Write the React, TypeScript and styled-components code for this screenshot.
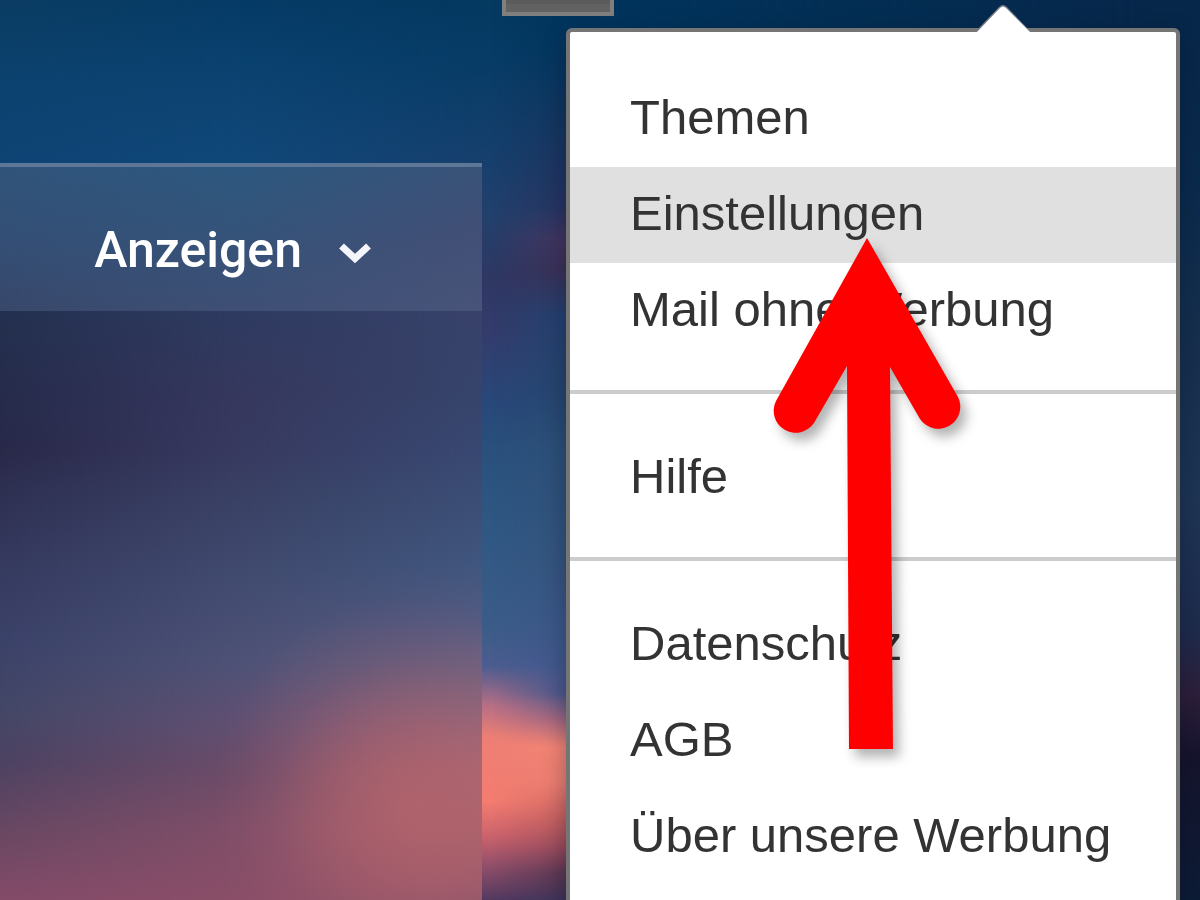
import React from "react";
import styled, { createGlobalStyle } from "styled-components";

const GlobalStyle = createGlobalStyle`
  *, *::before, *::after { box-sizing: border-box; }
  html, body, #root { margin: 0; height: 100%; }
  body { background: #0b3d63; }
`;

const Page = styled.div`
  position: relative;
  display: flex;
  flex-direction: column;
  height: 100vh;
  overflow: hidden;
  isolation: isolate;
  font-family: "Liberation Sans", Arial, sans-serif;
`;

const Sky = styled.div`
  position: absolute;
  inset: 0;
  z-index: -1;
`;

/* One vertical run of sky colours, faded in from left to right over the layer before it. */
const SkyLayer = styled.div<{ $stops: string; $fade?: string }>`
  position: absolute;
  inset: 0;
  background: linear-gradient(to bottom, ${(p) => p.$stops});
  ${(p) => p.$fade && `mask-image: linear-gradient(to right, ${p.$fade});`}
`;

/* The sunlit cloud seen through the panel. */
const CloudGlow = styled.div`
  position: absolute;
  inset: 0;
  background: radial-gradient(
    ellipse 42% 28% at 86% 85%,
    rgba(182, 100, 107, 0.75) 0%,
    rgba(178, 98, 107, 0.5) 35%,
    rgba(160, 92, 110, 0.18) 70%,
    rgba(150, 90, 110, 0) 100%
  );
`;

const TopBar = styled.header`
  display: flex;
  flex: none;
  justify-content: flex-end;
  align-items: flex-start;
  height: 28px;
  padding-right: 586px;
`;

const TopButton = styled.button`
  width: 112px;
  height: 16px;
  padding: 0;
  border: 4px solid #7f7f7f;
  border-top: 0;
  background: #5b5b5b;
  box-shadow: inset 0 -8px 0 #626262;
`;

const Columns = styled.div`
  flex: 1;
  display: grid;
  grid-template-columns: minmax(0, 1fr) 614px;
  gap: 84px;
  min-height: 0;
  padding-right: 20px;
`;

const Panel = styled.main`
  position: relative;
  isolation: isolate;
  margin-top: 135px;
`;

const Toolbar = styled.div`
  position: relative;
  display: flex;
  justify-content: flex-end;
  height: 148px;
  padding: 53px 111px 0 0;
  border-top: 4px solid #5f7796;
  isolation: isolate;
`;

const ViewButton = styled.button`
  display: flex;
  align-items: center;
  gap: 37px;
  height: 60px;
  padding: 0;
  border: 0;
  background: none;
  color: #fff;
  font: 500 50px/60px Roboto, "Noto Sans", sans-serif;
`;

const Menu = styled.nav`
  position: relative;
  border: 4px solid #757575;
  border-radius: 6px;
  background: #fff;
  box-shadow: 0 8px 24px rgba(0, 8, 24, 0.32);
`;

const MenuTip = styled.svg`
  position: absolute;
  right: 143px;
  top: -28px;
`;

const MenuGroup = styled.ul`
  margin: 0;
  padding: 36px 0 31px;
  list-style: none;

  & + & {
    border-top: 4px solid #ccc;
  }
  &:first-of-type {
    padding-top: 39px;
  }
`;

const MenuLink = styled.a<{ $active?: boolean }>`
  display: block;
  padding: 0 0 4px 60px;
  background: ${(p) => (p.$active ? "#e0e0e0" : "transparent")};
  color: #333;
  font-size: 49px;
  line-height: 92px;
  text-decoration: none;
  white-space: nowrap;
`;

const Pointer = styled.svg`
  position: absolute;
  top: 200px;
  right: 196px;
  pointer-events: none;
  filter: drop-shadow(6px 8px 6px rgba(0, 0, 0, 0.3));
`;

const groups = [
  ["Themen", "Einstellungen", "Mail ohne Werbung"],
  ["Hilfe"],
  ["Datenschutz", "AGB", "Über unsere Werbung"],
];

export default function App() {
  return (
    <Page>
      <GlobalStyle />
      <Sky aria-hidden="true">
        <SkyLayer $stops="#0b3d63 0%, #0c426f 9%, #0e4475 18%, #24304f 100%" />
        <SkyLayer
          $fade="transparent 0%, #000 20%"
          $stops="#053b66 0%, #0b4270 8%, #10487a 18%, #24304f 100%"
        />
        <SkyLayer
          $fade="transparent 20%, #000 40%"
          $stops="#043960 0%, #063c66 6%, #153f6d 17%, #23406c 24%, #2f3763 31%, #333c6c 37%, #28487a 45%, #2a507c 50%, #2e5782 58%, #3c5c88 70%, #4c5c90 74%, #b96f84 78.5%, #ee7f74 82%, #f47c70 89%, #ca626c 93%, #94506a 96%, #53395f 100%"
        />
        <SkyLayer
          $fade="transparent 41%, #000 47%"
          $stops="#00345c 0%, #04365f 6%, #17365f 15%, #263462 23%, #42355f 26.5%, #3b3157 30%, #24416f 35%, #26466f 44%, #2c5078 50%, #34547e 62%, #40588c 73%, #4a588c 77%, #a06680 80%, #f28574 83%, #ea7d70 87%, #c4605f 91%, #9a4c5c 94%, #5c3852 97%, #3f3459 100%"
        />
        <SkyLayer
          $fade="transparent 50%, #000 96%"
          $stops="#06274a 0%, #0a2a4d 20%, #17304e 40%, #1e3555 55%, #1e2c4d 70%, #2d1f3b 77%, #16142d 84%, #0c1c36 100%"
        />
      </Sky>

      <TopBar>
        <TopButton type="button" aria-label="Menü" />
      </TopBar>

      <Columns>
        <Panel>
          <Sky aria-hidden="true">
            <SkyLayer $stops="#24304f 20%, #262c4c 30%, #29294a 38%, #2e3052 43%, #363b60 54%, #3b4269 63%, #434767 72%, #4d4262 79%, #6b4863 89%, #834b69 97%, #854b69 100%" />
            <SkyLayer
              $fade="transparent 0%, #000 50%"
              $stops="#2f3b61 20%, #36385e 30%, #383a60 38%, #3a4265 45%, #424b70 55%, #4e5276 66%, #5f5073 73%, #6c4c69 80%, #804e68 88%, #8a4e68 97%, #8b5068 100%"
            />
            <SkyLayer
              $fade="transparent 50%, #000 100%"
              $stops="#38426a 20%, #36446b 30%, #384872 38%, #3c4e76 45%, #40567e 53%, #555b82 61%, #76647f 69%, #94677c 75%, #a96875 80%, #a9646d 88%, #98596a 95%, #875268 100%"
            />
            <CloudGlow />
          </Sky>
          <Toolbar>
            <Sky aria-hidden="true">
              <SkyLayer $stops="#31547b, #344f76 50%, #38486b" />
              <SkyLayer $fade="transparent 0%, #000 50%" $stops="#2d587f, #365379 50%, #3f4f75" />
              <SkyLayer $fade="transparent 50%, #000 100%" $stops="#395278, #434f76 50%, #48547a" />
            </Sky>
            <ViewButton type="button">
              Anzeigen
              <svg width="32" height="32" viewBox="0 0 32 32" aria-hidden="true">
                <path
                  d="M2.5 12L16 24.5L29.5 12"
                  fill="none"
                  stroke="#f4f5fa"
                  strokeWidth="7"
                />
              </svg>
            </ViewButton>
          </Toolbar>
        </Panel>

        <Menu aria-label="Einstellungen">
          <MenuTip width="60" height="28" viewBox="0 0 60 28" aria-hidden="true">
            <path d="M2 28L26 3Q30 -1 34 3L58 28Z" fill="#777c84" />
            <path d="M4 28L27 4Q30 1 33 4L57 28Z" fill="#fff" />
          </MenuTip>
          {groups.map((items) => (
            <MenuGroup key={items[0]}>
              {items.map((label) => (
                <li key={label}>
                  <MenuLink href="#" $active={label === "Einstellungen"}>
                    {label}
                  </MenuLink>
                </li>
              ))}
            </MenuGroup>
          ))}
          <Pointer width="220" height="540" viewBox="760 232 220 540" aria-hidden="true">
            <path
              d="M867 238L958 397A22 22 0 0 1 920 419L890 367L893 749H849L847 366L814 423A22 22 0 0 1 776 401Z"
              fill="#f00"
            />
          </Pointer>
        </Menu>
      </Columns>
    </Page>
  );
}
